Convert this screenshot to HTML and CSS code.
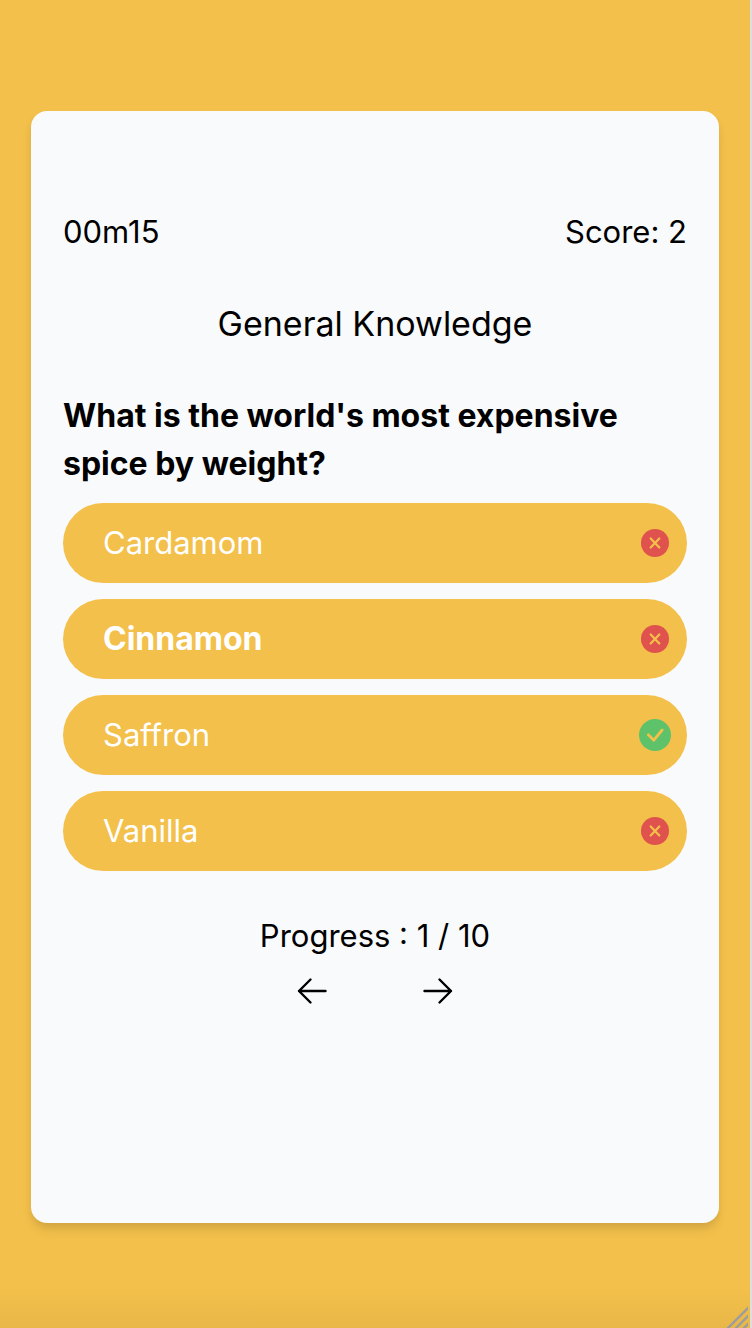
FILE: index.html
```html
<!DOCTYPE html>
<html lang="en">
<head>
<meta charset="utf-8">
<meta name="viewport" content="width=device-width, initial-scale=1">
<title>General Knowledge Quiz</title>
<link rel="stylesheet" href="styles.css">
</head>
<body>
<svg class="sprite" aria-hidden="true">
  <symbol id="wrong" viewBox="0 0 32 32">
    <circle cx="16" cy="16" r="14" fill="#df524d"/>
    <path d="M11.7 11.500l8.600 9M20.300 11.500l-8.600 9" fill="none" stroke="#f3c04b" stroke-width="2.200" stroke-linecap="round"/>
  </symbol>
  <symbol id="right" viewBox="0 0 32 32">
    <circle cx="16" cy="16" r="16" fill="#5dc26a"/>
    <path d="M9.300 15.800l5.500 5.400L23.200 11" fill="none" stroke="#f3c04b" stroke-width="2.800" stroke-linecap="round" stroke-linejoin="round"/>
  </symbol>
</svg>
<div class="page">
  <main class="card">
    <header class="status">
      <span>00m15</span>
      <span>Score: 2</span>
    </header>
    <h1 class="category">General Knowledge</h1>
    <h2 class="question">What is the world's most expensive spice by weight?</h2>
    <div class="answers">
      <button class="answer" type="button">Cardamom<svg class="mark" role="img" aria-label="Wrong"><use href="#wrong"/></svg></button>
      <button class="answer chosen" type="button">Cinnamon<svg class="mark" role="img" aria-label="Wrong"><use href="#wrong"/></svg></button>
      <button class="answer" type="button">Saffron<svg class="mark" role="img" aria-label="Correct"><use href="#right"/></svg></button>
      <button class="answer" type="button">Vanilla<svg class="mark" role="img" aria-label="Wrong"><use href="#wrong"/></svg></button>
    </div>
    <p class="progress">Progress : 1 / 10</p>
    <nav class="pager">
      <button class="arrow" type="button" aria-label="Previous question">
        <svg viewBox="0 0 32 32"><path d="M29.500 16H3M14.500 4.500L3 16l11.500 11.500"/></svg>
      </button>
      <button class="arrow" type="button" aria-label="Next question">
        <svg viewBox="0 0 32 32"><path d="M2.500 16H29M17.500 4.500L29 16 17.500 27.500"/></svg>
      </button>
    </nav>
  </main>
  <svg class="grip" viewBox="0 0 24 24" aria-hidden="true"><path d="M0 26L26 0M8 26L26 8M16 26L26 16"/></svg>
</div>
</body>
</html>
```
FILE: styles.css
```css
* {
  box-sizing: border-box;
}

body {
  margin: 0;
  font-family: Inter, "Liberation Sans", sans-serif;
  font-size: 31px;
  line-height: 48px;
  color: #000;
  background: #dedede;
}

.sprite {
  position: absolute;
  width: 0;
  height: 0;
}

.page {
  position: relative;
  display: flex;
  flex-direction: column;
  min-height: 100vh;
  margin-right: 2px;
  padding: 111px 31px 105px;
  background: linear-gradient(to top, #e8b747, #f3c04b 40px);
}

.card {
  flex: 1;
  padding: 97px 32px;
  border-radius: 16px;
  background: #f9fafc;
  box-shadow: 0 8px 12px -2px rgba(0, 0, 0, 0.1), 0 4px 8px -2px rgba(0, 0, 0, 0.08);
}

.status {
  display: flex;
  justify-content: space-between;
}

.category {
  margin: 40px 0;
  font-size: 34px;
  font-weight: 400;
  line-height: 56px;
  text-align: center;
}

.question {
  margin: 0 0 15px;
  font-size: 32px;
  font-weight: 700;
}

.answers {
  display: grid;
  gap: 16px;
}

.answer {
  display: flex;
  align-items: center;
  justify-content: space-between;
  padding: 16px 16px 16px 40px;
  border: 0;
  border-radius: 40px;
  font: inherit;
  color: #fff;
  background: #f3c04b;
  cursor: pointer;
}

.chosen {
  font-size: 32px;
  font-weight: 700;
}

.mark {
  width: 32px;
  height: 32px;
}

.progress {
  margin: 41px 0 15px;
  text-align: center;
}

.pager {
  display: flex;
  justify-content: center;
  gap: 94px;
}

.arrow {
  display: flex;
  padding: 0;
  border: 0;
  background: none;
  cursor: pointer;
}

.arrow svg {
  width: 32px;
  height: 32px;
  fill: none;
  stroke: #000;
  stroke-width: 2.4;
  stroke-linecap: round;
  stroke-linejoin: round;
}

.grip {
  position: absolute;
  right: 2px;
  bottom: -2px;
  width: 24px;
  height: 24px;
  fill: none;
  stroke: #9d9d9d;
  stroke-width: 2.4;
}
```
